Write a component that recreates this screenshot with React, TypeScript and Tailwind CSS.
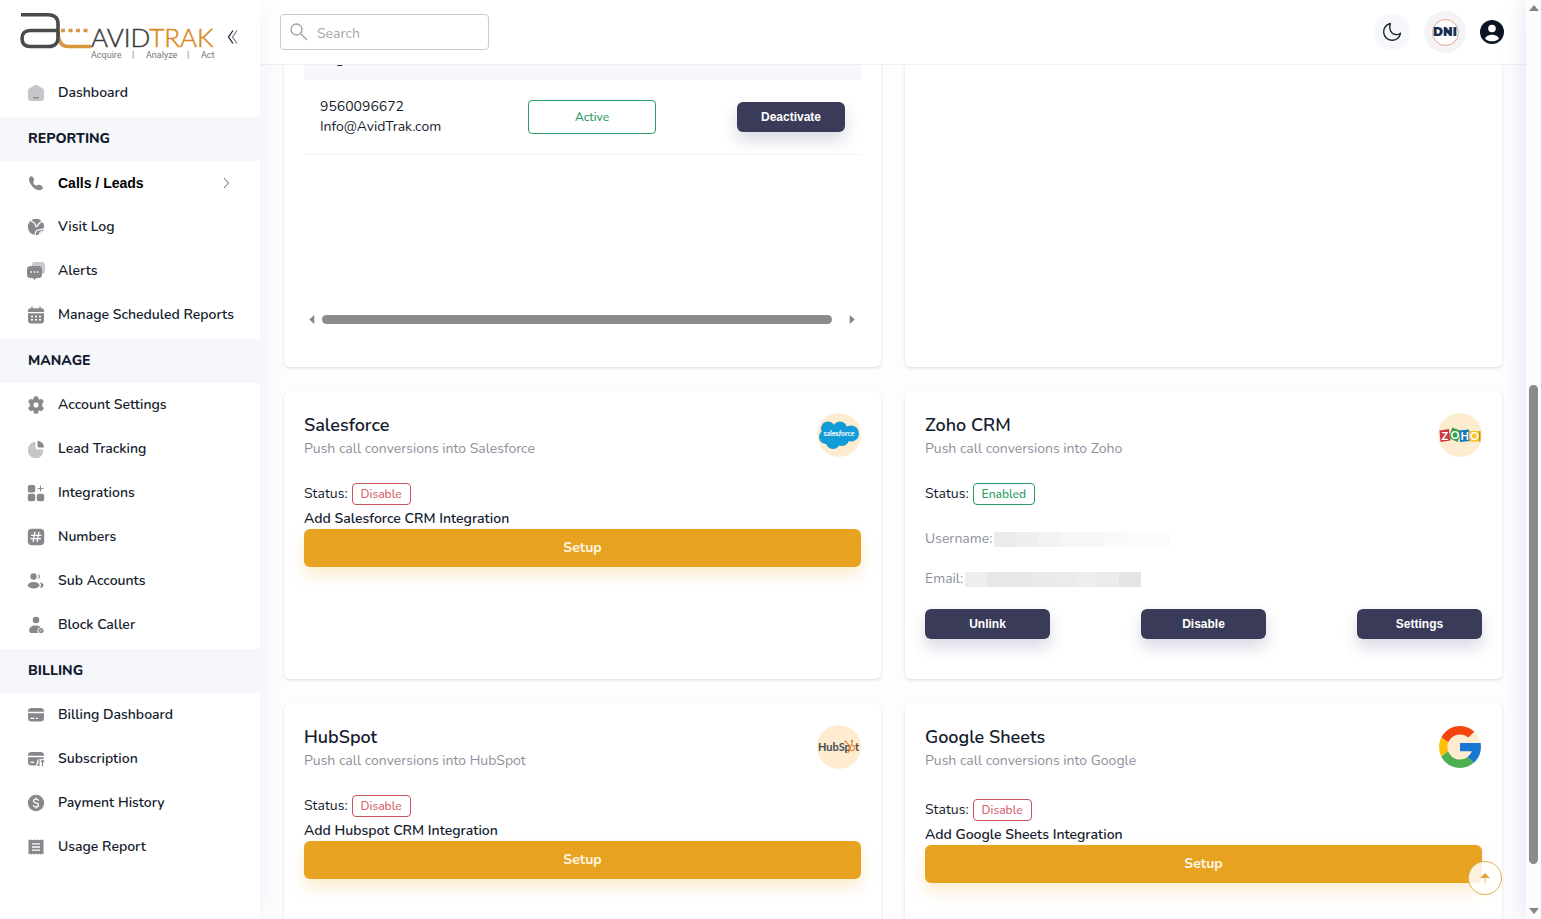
import type { ReactNode } from "react";

interface NavItem {
  label: string;
  icon: ReactNode;
  expandable?: boolean;
}

interface NavSection {
  title?: string;
  items: NavItem[];
}

function NavIcon({ children }: { children: ReactNode }) {
  return (
    <svg
      viewBox="0 0 18 18"
      className="h-[18px] w-[18px] flex-shrink-0 text-[#86888c]"
      fill="currentColor"
      aria-hidden="true"
    >
      {children}
    </svg>
  );
}

const NAV: NavSection[] = [
  {
    items: [
      {
        label: "Dashboard",
        icon: (
          <NavIcon>
            <path
              d="M7.6 1.2a2.6 2.6 0 012.8 0l5 3A3 3 0 0117 6.8V14a3 3 0 01-3 3H4a3 3 0 01-3-3V6.800a3 3 0 011.500-2.600z"
              className="text-[#c6c6ca]"
            />
            <rect x="6" y="13" width="6" height="1.600" rx="0.800" />
          </NavIcon>
        ),
      },
    ],
  },
  {
    title: "REPORTING",
    items: [
      {
        label: "Calls / Leads",
        expandable: true,
        icon: (
          <NavIcon>
            <path d="M2.600 3.300C3.600 2 5.300 1.900 6 3.200l.9 1.700c.5 1 .2 1.900-.6 2.800-.3 2 1.800 4 3.900 3.900.9-.9 1.900-1.100 2.900-.6l1.900 1c1.100.7 1.100 2.200 0 3.200-2.200 2-6 .8-8.900-2C3 10 .9 5.800 2.600 3.300z" />
          </NavIcon>
        ),
      },
      {
        label: "Visit Log",
        icon: (
          <NavIcon>
            <circle cx="9" cy="9" r="8.200" />
            <path
              d="M4 1.500c.2 2 1.200 2.500 2.800 3 2 .6.800 3 2.500 4.200 1.600-.3 1.800-2.500 3.200-3.700 1-.9 2-1 3-1.500M8 17.500c.2-2 0-4 1.800-5 2-1 4-.2 7.500-2M12.500 16.500c0-1.500.8-2.600 3-3"
              fill="none"
              stroke="white"
              strokeWidth="1.300"
            />
          </NavIcon>
        ),
      },
      {
        label: "Alerts",
        icon: (
          <NavIcon>
            <path
              d="M8 0h7a3 3 0 013 3v6a3 3 0 01-3 3H8a3 3 0 01-3-3V3a3 3 0 013-3z"
              className="text-[#c9cacd]"
            />
            <path d="M3.500 4h8A3.500 3.500 0 0115 7.500v5a3.500 3.500 0 01-3.500 3.500H9.200L7.500 18l-1.700-2H3.500A3.500 3.500 0 010 12.500v-5A3.500 3.500 0 013.500 4z" />
            <path
              d="M3.500 10h1.500M6.800 10h1.500M10 10h1.500"
              stroke="white"
              strokeWidth="1.400"
            />
          </NavIcon>
        ),
      },
      {
        label: "Manage Scheduled Reports",
        icon: (
          <NavIcon>
            <path d="M4.300.5h1.400v1.700h6.600V.500h1.400v1.700h.8A2.500 2.500 0 0117 4.700V6H1V4.700a2.500 2.500 0 012.500-2.500h.8z" />
            <path d="M1 7.200h16v7.300a3 3 0 01-3 3H4a3 3 0 01-3-3z" />
            <path
              d="M4 10.500h2M8 10.500h2M12 10.500h2M4 13.800h2M8 13.800h2M12 13.800h2"
              stroke="white"
              strokeWidth="1.600"
            />
          </NavIcon>
        ),
      },
    ],
  },
  {
    title: "MANAGE",
    items: [
      {
        label: "Account Settings",
        icon: (
          <NavIcon>
            <path
              fillRule="evenodd"
              d="M7.300.8h3.400l.5 2.300 1.300.8 2.300-.8L16.500 6l-1.700 1.700v2.600l1.700 1.700-1.700 2.900-2.300-.8-1.300.8-.5 2.300H7.300l-.5-2.300-1.300-.8-2.300.8L1.500 12l1.700-1.700V7.700L1.500 6l1.700-2.900 2.300.8 1.300-.8zM9 6.100a2.900 2.900 0 100 5.800 2.900 2.900 0 000-5.800z"
              stroke="currentColor"
              strokeWidth="0.700"
              strokeLinejoin="round"
            />
          </NavIcon>
        ),
      },
      {
        label: "Lead Tracking",
        icon: (
          <NavIcon>
            <path
              d="M7.500 2A.8.8 0 018.500 2.800V7a2.500 2.500 0 002.500 2.500h4.500c.6 0 .9.500.8 1A7.700 7.700 0 111 9.500C1 5.800 4 2.500 7.500 2z"
              className="text-[#c6c6ca]"
            />
            <path d="M10.500 2c0-.8.600-1.300 1.300-1.100A7.500 7.500 0 0117 6.200c.2.700-.3 1.300-1.100 1.300H12A1.500 1.500 0 0110.500 6z" />
          </NavIcon>
        ),
      },
      {
        label: "Integrations",
        icon: (
          <NavIcon>
            <rect x="0.800" y="1" width="7.400" height="7.400" rx="2" />
            <rect x="0.800" y="9.800" width="7.400" height="7.400" rx="2" />
            <rect x="9.800" y="9.800" width="7.400" height="7.400" rx="2" />
            <path d="M13.500 1.500v6M10.500 4.500h6" stroke="currentColor" strokeWidth="1" />
          </NavIcon>
        ),
      },
      {
        label: "Numbers",
        icon: (
          <NavIcon>
            <rect x="0.800" y="0.800" width="16.400" height="16.400" rx="4" />
            <path
              d="M7.800 4.500l-1.600 9M11.800 4.500l-1.600 9M4.500 7.300h9.500M4 10.700h9.500"
              stroke="white"
              strokeWidth="1.300"
              strokeLinecap="round"
            />
          </NavIcon>
        ),
      },
      {
        label: "Sub Accounts",
        icon: (
          <NavIcon>
            <circle cx="6.500" cy="4.500" r="3.200" />
            <path d="M11 1.700a3 3 0 010 5.600c.8-1.700.8-3.900 0-5.600z" />
            <ellipse cx="6.600" cy="13.300" rx="5.800" ry="3.200" />
            <path d="M13 10.500c2.300.3 3.500 1.400 3.500 2.800s-1.200 2.500-3.500 2.800c1.200-1.800 1.200-3.800 0-5.600z" />
          </NavIcon>
        ),
      },
      {
        label: "Block Caller",
        icon: (
          <NavIcon>
            <circle cx="9" cy="4" r="3.300" />
            <path d="M8.500 9.500c2.200 0 4 .5 5.100 1.500a4 4 0 00-2.600 6H5c-2 0-2.800-1-2.800-2.600 0-2.900 2.800-4.900 6.300-4.900z" />
            <circle cx="14" cy="14.500" r="2.600" />
            <path d="M12.700 15.700l2.500-2.400" stroke="white" strokeWidth="0.900" />
          </NavIcon>
        ),
      },
    ],
  },
  {
    title: "BILLING",
    items: [
      {
        label: "Billing Dashboard",
        icon: (
          <NavIcon>
            <path d="M4 2h10a3.200 3.200 0 013 3.800H1A3.200 3.200 0 014 2z" />
            <path d="M1 7.300h16V12a3.500 3.500 0 01-3.500 3.500h-9A3.500 3.500 0 011 12z" />
            <path d="M3.500 12.300h4M9 12.300h2" stroke="white" strokeWidth="1.300" />
          </NavIcon>
        ),
      },
      {
        label: "Subscription",
        icon: (
          <NavIcon>
            <path d="M4 2h10a3.200 3.200 0 013 3.800H1A3.200 3.200 0 014 2z" />
            <path d="M1 7.300h16v1.200l-6.500 1.200-1.500 5.800H4.500A3.500 3.500 0 011 12z" />
            <path d="M3.500 12.300h3.500" stroke="white" strokeWidth="1.300" />
            <path
              d="M12 10v6m-1.800-1.600L12 16.200M15.500 16.200v-6m-1.600 1.700l1.600-1.700 1.600 1.700"
              fill="none"
              stroke="currentColor"
              strokeWidth="1.200"
            />
          </NavIcon>
        ),
      },
      {
        label: "Payment History",
        icon: (
          <NavIcon>
            <circle cx="9" cy="9" r="8.200" />
            <path
              d="M11.500 6.800c-.2-1.100-1.100-1.700-2.500-1.700s-2.500.7-2.500 1.900c0 2.600 5 1.300 5 4 0 1.200-1.100 1.900-2.500 1.900s-2.400-.6-2.600-1.800M9 3.500v1.600M9 12.900v1.600"
              fill="none"
              stroke="white"
              strokeWidth="1.300"
            />
          </NavIcon>
        ),
      },
      {
        label: "Usage Report",
        icon: (
          <NavIcon>
            <path d="M1.500 1.500l1.300.8 1.500-.8 1.600.8 1.500-.8 1.600.8 1.600-.8 1.500.8 1.600-.8 1.500.8 1.300-.8v15l-1.300-.8-1.500.8-1.600-.8-1.500.8-1.600-.8-1.600.8-1.500-.8-1.600.8-1.500-.8-1.300.8z" />
            <path
              d="M5 5.800h8M5 9h8M5 12.200h8"
              stroke="white"
              strokeWidth="1.300"
            />
          </NavIcon>
        ),
      },
    ],
  },
];

function BrandLogo() {
  return (
    <svg
      viewBox="0 0 198 50"
      className="h-[50px] w-[198px] flex-shrink-0"
      fill="none"
      role="img"
      aria-label="AvidTrak"
    >
      <path
        d="M38 20c0 9 3 15.500 10 15.500h23"
        stroke="#d9963c"
        strokeWidth="3.600"
      />
      <path d="M41 19.500h27" stroke="#d9963c" strokeWidth="3.400" strokeDasharray="4 3.500" />
      <path
        d="M1 3.700h27c7 0 10 4 10 9v14c0 5-3 8.800-9 8.800H10c-5 0-8-3-8-8s3-8 8-8h28"
        stroke="#4a4a4c"
        strokeWidth="3.600"
      />
      <g fontFamily="Lato, sans-serif" fontSize="26" fontWeight="300" strokeWidth="0.500">
        <text x="71" y="36" fill="#3c3c3f" stroke="#3c3c3f">
          AVID<tspan fill="#d98a22" stroke="#d98a22">TRAK</tspan>
        </text>
      </g>
      <g fontFamily="Roboto, sans-serif" fontSize="9" fill="#77777a">
        <text x="71" y="47">Acquire</text>
        <text x="112" y="47">|</text>
        <text x="126" y="47">Analyze</text>
        <text x="167" y="47">|</text>
        <text x="181" y="47">Act</text>
      </g>
    </svg>
  );
}

function Sidebar() {
  return (
    <aside className="z-20 w-[260px] flex-shrink-0 bg-white shadow-[0_0_24px_rgba(90,100,190,0.08)]">
      <div className="flex h-[71px] items-start pl-5 pt-[11px]">
        <BrandLogo />
        <button type="button" aria-label="Collapse sidebar" className="ml-2 mt-[18px]">
          <svg viewBox="0 0 14 16" className="h-4 w-[14px]" fill="none" strokeWidth="1.300">
            <path d="M7 1.500L2.500 8 7 14.500" stroke="#1b2433" />
            <path d="M11 1.500L6.500 8l4.500 6.500" stroke="#7b818c" />
          </svg>
        </button>
      </div>
      <nav>
        {NAV.map((section) => (
          <div key={section.title ?? "top"}>
            {section.title && (
              <h2 className="flex h-11 items-center bg-[#f5f7fb] px-7 text-sm font-extrabold">
                {section.title}
              </h2>
            )}
            <ul className="pb-0.5">
              {section.items.map((item) => (
                <li key={item.label}>
                  {item.expandable ? (
                    <button
                      type="button"
                      aria-expanded="false"
                      className="flex h-11 w-full items-center gap-3 pl-[27px] pr-7 text-left font-['Liberation_Sans',sans-serif] text-sm font-bold text-black"
                    >
                      {item.icon}
                      <span className="flex-1 pl-px">{item.label}</span>
                      <svg viewBox="0 0 12 12" className="h-3 w-3" fill="none" stroke="#60656e">
                        <path d="M4 1l4.500 5L4 11" />
                      </svg>
                    </button>
                  ) : (
                    <a href="#" className="flex h-11 items-center gap-3 pl-[27px] text-sm font-semibold">
                      {item.icon}
                      <span className="pl-px">{item.label}</span>
                    </a>
                  )}
                </li>
              ))}
            </ul>
          </div>
        ))}
      </nav>
    </aside>
  );
}

function Header() {
  return (
    <header className="z-10 flex h-[65px] flex-shrink-0 items-center justify-between border-b border-[#f0f0f3] bg-white pl-5 pr-[22px]">
      <label className="flex h-9 w-[209px] items-center gap-2 rounded border border-[#c9cbcf] px-2">
        <svg
          viewBox="0 0 20 20"
          className="h-5 w-5 flex-shrink-0"
          fill="none"
          stroke="#9c9ea3"
          strokeWidth="1.300"
        >
          <circle cx="7.500" cy="7.500" r="5.500" />
          <path d="M11.500 11.500l6.500 6.500" />
        </svg>
        <input
          type="search"
          placeholder="Search"
          aria-label="Search"
          className="w-full min-w-0 bg-transparent pt-[3px] text-sm outline-none placeholder:text-[#a6a8ad]"
        />
      </label>
      <div className="flex items-center gap-[14px]">
        <button
          type="button"
          aria-label="Dark mode"
          className="flex h-9 w-9 items-center justify-center rounded-full bg-[#f6f7fa]"
        >
          <svg viewBox="0 0 20 20" className="h-5 w-5" fill="none" stroke="#1b2433" strokeWidth="1.400">
            <path
              d="M8.300 1.500A8.500 8.500 0 1018.500 11.300c-1.500 1.300-3.300 1.600-5.300 1.200-4.500-1-6.700-5.500-4.900-11z"
              strokeLinejoin="round"
            />
          </svg>
        </button>
        <button
          type="button"
          className="flex h-[42px] w-[42px] items-center justify-center rounded-full bg-[#f4f4f8]"
        >
          <span className="flex h-[27px] w-[27px] items-center justify-center rounded-full border border-[#e3a58f] bg-white font-['Montserrat','Open_Sans',sans-serif] text-xs font-black text-[#17304f]">
            DNI
          </span>
        </button>
        <button type="button" aria-label="Account">
          <svg viewBox="0 0 24 24" className="h-6 w-6">
            <circle cx="12" cy="12" r="12" fill="#0c1526" />
            <circle cx="12" cy="8.500" r="3.800" fill="white" />
            <path d="M5 18.800c1-3 4-4 7-4s6 1 7 4c-3.600 3.400-10.400 3.400-14 0z" fill="white" />
          </svg>
        </button>
      </div>
    </header>
  );
}

function Card({ children }: { children: ReactNode }) {
  return (
    <section className="rounded-md bg-white px-5 pb-10 pt-[22px] shadow-[0_1px_3px_rgba(40,45,80,0.16)]">
      {children}
    </section>
  );
}

function CardHeader({ title, text, logo }: { title: string; text: string; logo: ReactNode }) {
  return (
    <div className="flex items-start justify-between">
      <div>
        <h3 className="text-lg font-semibold leading-6">{title}</h3>
        <p className="text-sm leading-6 text-[#8f909d]">{text}</p>
      </div>
      {logo}
    </div>
  );
}

function StatusBadge({ enabled }: { enabled?: boolean }) {
  return (
    <div className="flex items-center gap-1 text-sm">
      Status:
      <span
        className={`rounded border px-2 text-xs font-medium leading-5 ${
          enabled ? "border-[#2a9a62] text-[#2a9a62]" : "border-[#c9545f] text-[#d4626d]"
        }`}
      >
        {enabled ? "Enabled" : "Disable"}
      </span>
    </div>
  );
}

function DarkButton({ children }: { children: ReactNode }) {
  return (
    <button
      type="button"
      className="h-[30px] w-full rounded-md bg-[#3a3b58] font-['Liberation_Sans',sans-serif] text-xs font-bold text-white shadow-[0_8px_16px_rgba(58,59,120,0.2)]"
    >
      {children}
    </button>
  );
}

function SetupBlock({ label }: { label: string }) {
  return (
    <>
      <p className="mt-1 text-sm leading-5 font-semibold">{label}</p>
      <button
        type="button"
        className="h-[38px] w-full rounded-md bg-[#e7a220] text-sm font-bold text-[#fff8e8] shadow-[0_8px_16px_rgba(231,162,32,0.22)]"
      >
        Setup
      </button>
    </>
  );
}

function SalesforceLogo() {
  return (
    <svg viewBox="0 0 44 44" className="h-11 w-11" aria-hidden="true">
      <circle cx="22" cy="22" r="22" fill="#fdecd0" />
      <g fill="#119cd8">
        <circle cx="11" cy="15.500" r="7" />
        <circle cx="23" cy="15.500" r="7" />
        <circle cx="34" cy="20.500" r="8" />
        <circle cx="9" cy="24" r="7" />
        <circle cx="16" cy="28.500" r="7.500" />
        <circle cx="25" cy="26" r="7" />
      </g>
      <text
        x="22"
        y="23"
        textAnchor="middle"
        fontFamily="Lato, sans-serif"
        fontSize="7"
        fontWeight="700"
        fill="white"
      >
        sales<tspan fontStyle="italic">f</tspan>orce
      </text>
    </svg>
  );
}

function ZohoLogo() {
  return (
    <svg viewBox="0 0 44 44" className="h-11 w-11" aria-hidden="true">
      <circle cx="22" cy="22" r="22" fill="#fdecd0" />
      <path d="M1.500 17.500l9.500-1.500 1.500 11.500-10 1.500z" fill="#d2393f" />
      <path d="M14 14.500l9.500 3.500-4 11-8.500-4z" fill="#38a04c" />
      <path d="M21.500 17.500l9.500-1 .8 11.500-10 1z" fill="#1878bd" />
      <path d="M31.500 18h10v10.500h-10z" fill="#f3c623" />
      <path d="M41 18h1.500v10.500H41z" fill="#c2921d" />
      <g fontFamily="Lato, sans-serif" fontSize="11" fontWeight="700" fill="white">
        <text x="3.500" y="26.500">Z</text>
        <text x="12.500" y="26">O</text>
        <text x="22.500" y="26.500">H</text>
        <text x="32" y="27">O</text>
      </g>
    </svg>
  );
}

function HubSpotLogo() {
  return (
    <svg viewBox="0 0 44 44" className="h-11 w-11" aria-hidden="true">
      <circle cx="22" cy="22" r="22" fill="#fdecd0" />
      <g fontFamily="Lato, sans-serif" fontSize="11" fontWeight="700" fill="#464b50">
        <text x="1" y="26">HubSp</text>
        <text x="38" y="26">t</text>
      </g>
      <g fill="none" stroke="#e58a45" strokeWidth="1.200">
        <circle cx="35" cy="23" r="2.600" />
        <path d="M35 20.400v-4M33 21l-4.500-4.500M33 25l-2.500 3" />
      </g>
      <circle cx="35" cy="16" r="1.200" fill="#e58a45" />
      <circle cx="28.500" cy="16.500" r="1.100" fill="#e58a45" />
    </svg>
  );
}

function GoogleLogo() {
  return (
    <svg viewBox="3 3 42 42" className="h-11 w-11" aria-hidden="true">
      <circle cx="24" cy="24" r="20" fill="#fdecd0" />
      <path
        fill="#ffc107"
        d="M6.306 14.691l6.571 4.819A12 12 0 0012 24c0 1.400.25 2.800.717 4.054l-6.522 5.025A20 20 0 014 24c0-3.400.85-6.500 2.306-9.309z"
      />
      <path
        fill="#f4450f"
        d="M6.306 14.691l6.571 4.819C14.655 15.108 18.961 12 24 12c3.059 0 5.842 1.154 7.961 3.039l5.657-5.657C34.046 6.053 29.268 4 24 4 16.318 4 9.656 8.337 6.306 14.691z"
      />
      <path
        fill="#4caf50"
        d="M24 44c5.166 0 9.860-1.977 13.409-5.192l-6.190-5.238A11.900 11.900 0 0124 36c-5.202 0-9.619-3.317-11.283-7.946l-6.522 5.025C9.505 39.556 16.227 44 24 44z"
      />
      <path
        fill="#1976d2"
        d="M43.611 20.083H24V28h11.303a12 12 0 01-4.087 5.571l6.193 5.237C36.971 39.205 44 34 44 24c0-1.341-.138-2.650-.389-3.917z"
      />
    </svg>
  );
}

function NumbersCard() {
  return (
    <Card>
      <table className="w-full text-sm">
        <thead>
          <tr className="h-11 bg-[#f5f7fa] text-left">
            <th className="w-[208px] px-4 pt-0.5 font-bold">Login</th>
            <th className="px-4" />
            <th className="w-[140px] px-4" />
          </tr>
        </thead>
        <tbody>
          <tr className="h-[74px] border-b border-[#f4f4f6]">
            <td className="px-4 leading-5">
              9560096672
              <br />
              Info@AvidTrak.com
            </td>
            <td className="px-4">
              <button
                type="button"
                className="h-[34px] w-32 rounded border border-[#2a9a62] text-xs font-medium text-[#2a9a62]"
              >
                Active
              </button>
            </td>
            <td className="px-4">
              <DarkButton>Deactivate</DarkButton>
            </td>
          </tr>
        </tbody>
      </table>
      {/* horizontal scroll track */}
      <div className="mt-40 mb-[3px] flex h-[9px] items-center pl-[5px] pr-1.5" aria-hidden="true">
        <svg viewBox="0 0 6 10" className="h-[9px] w-[6px]" fill="#858585">
          <path d="M5.500 0v10L0 5z" />
        </svg>
        <div className="ml-[7px] flex-1 pr-[17px]">
          <div className="h-[9px] rounded-full bg-[#8b8b8b]" />
        </div>
        <svg viewBox="0 0 6 10" className="h-[9px] w-[6px]" fill="#858585">
          <path d="M.500 0v10L6 5z" />
        </svg>
      </div>
    </Card>
  );
}

// Masked values: one shade per block
const USERNAME_MASK = ["#ececed", "#efeff0", "#f2f2f2", "#f6f6f6", "#f8f8f8", "#faf9f9", "#fbfbfb", "#fcfcfc"];
const EMAIL_MASK = ["#eeeeef", "#e7e7e8", "#e6e7e7", "#eaeaeb", "#eaebeb", "#ededee", "#ebeced", "#e3e4e5"];

function MaskedValue({ label, shades }: { label: string; shades: string[] }) {
  return (
    <div className="flex h-10 items-center gap-0.5 text-sm text-[#8f909d]">
      {label}
      <span className="flex pt-0.5">
        {shades.map((shade) => (
          <span key={shade} className="h-[15px] w-[22px]" style={{ backgroundColor: shade }} />
        ))}
      </span>
    </div>
  );
}

function PageScrollbar() {
  return (
    <div
      className="z-20 flex w-[15px] flex-shrink-0 flex-col items-center bg-[#fcfcfc] py-1 shadow-[0_0_24px_rgba(90,100,190,0.22)]"
      aria-hidden="true"
    >
      <svg viewBox="0 0 10 6" className="my-px h-[6px] w-[10px]" fill="#858585">
        <path d="M5 0l5 6H0z" />
      </svg>
      <div className="flex w-[9px] flex-1 flex-col">
        <div className="flex-[373]" />
        <div className="flex-[479] rounded-full bg-[#8b8b8b]" />
        <div className="flex-[43]" />
      </div>
      <svg viewBox="0 0 10 6" className="my-px h-[6px] w-[10px]" fill="#858585">
        <path d="M0 0h10L5 6z" />
      </svg>
    </div>
  );
}

export default function App() {
  return (
    <div className="relative flex h-screen overflow-hidden bg-[#fdfdfe] font-['Nunito','Lato',sans-serif] text-[#141c2e]">
      <Sidebar />
      <div className="flex min-w-0 flex-1 flex-col">
        <Header />
        <main className="min-h-0 flex-1 overflow-hidden px-6">
          <div className="-mt-[51px] grid grid-cols-2 gap-6">
            <NumbersCard />
            <Card>{null}</Card>

            <Card>
              <CardHeader
                title="Salesforce"
                text="Push call conversions into Salesforce"
                logo={<SalesforceLogo />}
              />
              <div className="mt-[22px]">
                <StatusBadge />
              </div>
              <SetupBlock label="Add Salesforce CRM Integration" />
            </Card>

            <Card>
              <CardHeader title="Zoho CRM" text="Push call conversions into Zoho" logo={<ZohoLogo />} />
              <div className="mt-[22px]">
                <StatusBadge enabled />
              </div>
              <div className="mt-[14px] mb-[10px]">
                <MaskedValue label="Username:" shades={USERNAME_MASK} />
                <MaskedValue label="Email:" shades={EMAIL_MASK} />
              </div>
              <div className="flex justify-between">
                {["Unlink", "Disable", "Settings"].map((action) => (
                  <div key={action} className="w-[125px]">
                    <DarkButton>{action}</DarkButton>
                  </div>
                ))}
              </div>
            </Card>

            <Card>
              <CardHeader
                title="HubSpot"
                text="Push call conversions into HubSpot"
                logo={<HubSpotLogo />}
              />
              <div className="mt-[22px]">
                <StatusBadge />
              </div>
              <SetupBlock label="Add Hubspot CRM Integration" />
            </Card>

            <Card>
              <CardHeader
                title="Google Sheets"
                text="Push call conversions into Google"
                logo={<GoogleLogo />}
              />
              <div className="mt-[26px]">
                <StatusBadge />
              </div>
              <SetupBlock label="Add Google Sheets Integration" />
            </Card>
          </div>
        </main>
      </div>
      <PageScrollbar />

      <button
        type="button"
        aria-label="Back to top"
        className="absolute bottom-6 right-[39px] z-30 flex h-[34px] w-[34px] items-center justify-center rounded-full border border-[#e0b251] bg-white/85"
      >
        <svg viewBox="0 0 12 12" className="h-3 w-3">
          <path d="M6 1l5 5H1z" fill="#e0a73a" />
          <path d="M6 6v5" stroke="#f0d196" strokeWidth="1.500" />
        </svg>
      </button>
    </div>
  );
}
